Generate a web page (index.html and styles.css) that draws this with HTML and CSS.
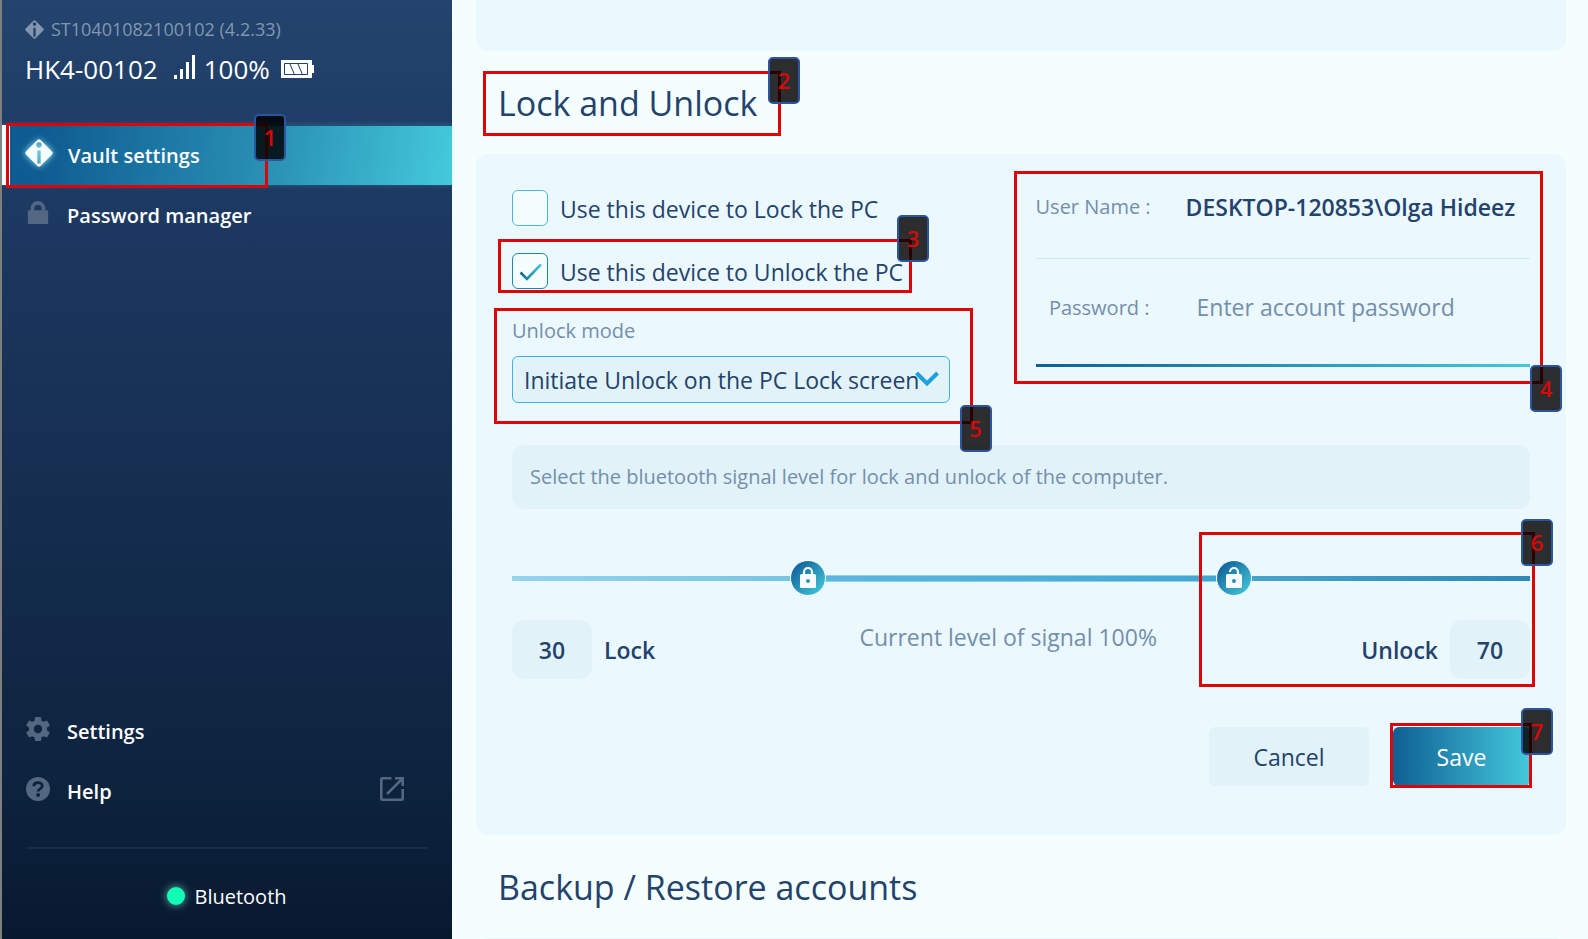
FILE: index.html
```html
<!DOCTYPE html>
<html lang="en">
<head>
<meta charset="utf-8">
<title>Vault settings</title>
<link rel="stylesheet" href="styles.css">
</head>
<body>
<div class="app">
  <aside class="sidebar">
    <header class="device">
      <div class="device-serial">
        <svg class="icon-serial" viewBox="0 0 28 28" aria-hidden="true"><path fill="currentColor" fill-rule="evenodd" d="M12.4 1a2.3 2.3 0 0 1 3.2 0L27 12.4a2.3 2.3 0 0 1 0 3.2L15.600 27a2.3 2.3 0 0 1-3.200 0L1 15.600a2.300 2.300 0 0 1 0-3.200zM14 3.300a2.700 2.700 0 1 0 0 5.400 2.700 2.700 0 0 0 0-5.400zM12.300 11.500v13h3.400v-13z"/></svg>
        <span>ST10401082100102 (4.2.33)</span>
      </div>
      <div class="device-status">
        <span class="device-name">HK4-00102</span>
        <svg class="icon-signal" viewBox="0 0 22 24" aria-hidden="true"><path fill="currentColor" d="M0 20h3v4H0zM6 14h3v10H6zM12 7h3v17h-3zM18 0h3v24h-3z"/></svg>
        <span>100%</span>
        <svg class="icon-battery" viewBox="0 0 33 18" aria-hidden="true"><path fill="currentColor" d="M0 0h31v5h2v8h-2v5H0z"/><path fill="none" stroke="#21416a" d="M3.500 3.500h23v11h-23zM9 4l4.500 10.500M17 4l4.500 10.500"/></svg>
      </div>
    </header>

    <nav class="nav">
      <a class="nav-item nav-item-active" href="#vault">
        <svg class="icon icon-vault" viewBox="0 0 28 28" aria-hidden="true"><path fill="currentColor" fill-rule="evenodd" d="M12.400 1a2.300 2.300 0 0 1 3.200 0L27 12.400a2.300 2.300 0 0 1 0 3.200L15.600 27a2.300 2.300 0 0 1-3.200 0L1 15.600a2.300 2.300 0 0 1 0-3.200zM14 3.300a2.700 2.700 0 1 0 0 5.400 2.700 2.700 0 0 0 0-5.400zM12.300 11.500v13h3.400v-13z"/></svg>
        <span>Vault settings</span>
        <span class="callout callout-nav"><b class="badge badge-top">1</b></span>
      </a>
      <a class="nav-item" href="#passwords">
        <svg class="icon" viewBox="0 0 24 26" aria-hidden="true"><path fill="currentColor" d="M2.500 10H4V8a8 8 0 0 1 16 0v2h1.500A1.500 1.500 0 0 1 23 11.500v12a1.500 1.500 0 0 1-1.500 1.500h-19A1.500 1.500 0 0 1 1 23.500v-12A1.500 1.500 0 0 1 2.500 10zM8 10h8V8a4 4 0 0 0-8 0z"/></svg>
        <span>Password manager</span>
      </a>
    </nav>

    <nav class="nav nav-bottom">
      <a class="nav-item" href="#settings">
        <svg class="icon" viewBox="2 2 20 20" aria-hidden="true"><path fill="currentColor" d="M12 15.500A3.500 3.500 0 0 1 8.500 12 3.500 3.500 0 0 1 12 8.500a3.500 3.500 0 0 1 3.500 3.500 3.500 3.500 0 0 1-3.500 3.500m7.430-2.530c.04-.32.07-.64.07-.97s-.03-.66-.07-1l2.110-1.630c.19-.15.24-.42.12-.64l-2-3.460c-.12-.22-.39-.31-.61-.22l-2.490 1c-.52-.39-1.060-.73-1.690-.98l-.37-2.650A.506.506 0 0 0 14 2h-4c-.25 0-.46.180-.5.420l-.37 2.650c-.63.250-1.170.590-1.690.980l-2.490-1c-.22-.09-.49 0-.61.220l-2 3.460c-.13.220-.07.490.12.640L4.570 11c-.04.340-.07.670-.07 1s.03.650.07.970l-2.110 1.660c-.19.150-.25.420-.12.640l2 3.460c.12.220.39.300.61.220l2.490-1.010c.52.400 1.060.740 1.690.990l.37 2.650c.04.240.250.420.5.420h4c.25 0 .46-.18.500-.42l.37-2.650c.63-.26 1.170-.59 1.690-.99l2.490 1.010c.22.080.49 0 .61-.22l2-3.460c.12-.22.070-.49-.12-.64z"/></svg>
        <span>Settings</span>
      </a>
      <a class="nav-item" href="#help">
        <svg class="icon" viewBox="0 0 24 24" aria-hidden="true"><circle cx="12" cy="12" r="12" fill="currentColor"/><path fill="none" stroke="#0d223d" stroke-width="2.800" d="M7.800 9.300C7.800 7 9.600 5.700 12 5.700s4.300 1.300 4.300 3.400c0 2.800-4.200 2.800-4.200 5.300"/><circle cx="12.100" cy="18" r="1.900" fill="#0d223d"/></svg>
        <span>Help</span>
        <svg class="icon icon-external" viewBox="0 0 26 26" aria-hidden="true"><path fill="none" stroke="currentColor" stroke-width="2.600" d="M12.500 2.300H3.300a1 1 0 0 0-1 1v19.400a1 1 0 0 0 1 1h19.400a1 1 0 0 0 1-1V13M16 2.300h7.700V10M23.500 2.500L8 18"/></svg>
      </a>
    </nav>

    <footer class="bluetooth"><span class="bluetooth-dot"></span><span>Bluetooth</span></footer>
  </aside>

  <main class="main">
    <section class="card card-previous"></section>

    <h2 class="heading"><span class="target">Lock and Unlock<span class="callout callout-heading"><b class="badge badge-top">2</b></span></span></h2>

    <form class="card card-lock">
      <div class="top">
        <div class="modes">
          <div class="check-row">
            <input class="check" type="checkbox" id="lock-pc">
            <label for="lock-pc">Use this device to Lock the PC</label>
          </div>
          <div class="check-row check-row-unlock target">
            <input class="check" type="checkbox" id="unlock-pc" checked>
            <label for="unlock-pc">Use this device to Unlock the PC</label>
            <span class="callout callout-unlock"><b class="badge badge-top">3</b></span>
          </div>
          <div class="mode target">
            <label class="mode-label" for="mode">Unlock mode</label>
            <div class="select-wrap">
              <select class="select" id="mode"><option>Initiate Unlock on the PC Lock screen</option></select>
              <svg class="chevron" viewBox="0 0 24 16" aria-hidden="true"><path fill="none" stroke="#1ca0de" stroke-width="4" d="M1.500 2L12 12.500 22.500 2"/></svg>
            </div>
            <span class="callout callout-mode"><b class="badge badge-bottom">5</b></span>
          </div>
        </div>

        <div class="account target">
          <div class="account-row">
            <span class="account-label">User Name :</span>
            <span class="account-user">DESKTOP-120853\Olga Hideez</span>
          </div>
          <div class="account-row account-row-password">
            <label class="account-label" for="password">Password :</label>
            <input class="account-password" id="password" type="password" placeholder="Enter account password">
          </div>
          <span class="callout callout-account"><b class="badge badge-bottom">4</b></span>
        </div>
      </div>

      <p class="hint">Select the bluetooth signal level for lock and unlock of the computer.</p>

      <div class="signal target">
        <div class="slider">
          <div class="track"><i class="track-low"></i><i class="track-mid"></i><i class="track-high"></i></div>
          <input class="range range-lock" type="range" min="4" max="96" value="30" aria-label="Lock level">
          <input class="range range-unlock" type="range" min="4" max="96" value="70" aria-label="Unlock level">
        </div>
        <div class="levels">
          <div class="level">
            <input class="level-value" id="lock-level" type="text" value="30">
            <label for="lock-level">Lock</label>
          </div>
          <p class="level-current">Current level of signal 100%</p>
          <div class="level">
            <label for="unlock-level">Unlock</label>
            <input class="level-value" id="unlock-level" type="text" value="70">
          </div>
        </div>
        <span class="callout callout-signal"><b class="badge badge-top">6</b></span>
      </div>

      <div class="actions">
        <button class="button" type="button">Cancel</button>
        <div class="target">
          <button class="button button-save" type="submit">Save</button>
          <span class="callout callout-save"><b class="badge badge-top">7</b></span>
        </div>
      </div>
    </form>

    <h2 class="heading">Backup / Restore accounts</h2>
    <section class="card card-next"></section>
  </main>
</div>
</body>
</html>
```

FILE: styles.css
```css
* { box-sizing: border-box; }

body {
  margin: 0;
  font-family: "Open Sans", "Noto Sans", sans-serif;
  font-size: 23px;
  color: #23426c;
  background: #f5feff;
}

input, select, button { font: inherit; color: inherit; }
p, h2 { margin: 0; font-weight: 400; }

.app {
  display: flex;
  height: 100vh;
  overflow: hidden;
}

/* Sidebar */
.sidebar {
  display: flex;
  flex-direction: column;
  flex: 0 0 452px;
  border-left: 2px solid #7f7f7f;
  color: #fff;
  background: linear-gradient(#23446e, #1c3860 25%, #0d223d 85%, #07192f);
}

.device { padding: 16px 24px 0 23px; height: 125px; }

.device-serial {
  display: flex;
  align-items: center;
  gap: 7px;
  font-size: 18px;
  line-height: 26px;
  color: #8297af;
}

.icon-serial { width: 19px; height: 19px; }

.device-status {
  display: flex;
  align-items: center;
  margin-top: 9px;
  font-size: 26px;
  line-height: 36px;
}

.icon-signal { width: 22px; height: 24px; margin: 0 8px 4px 16px; }
.icon-battery { width: 33px; height: 18px; margin-left: 11px; }

.nav-item {
  position: relative;
  display: flex;
  align-items: center;
  height: 60px;
  padding: 0 47px 0 24px;
  gap: 17px;
  font-size: 20px;
  font-weight: 600;
  color: #fff;
  text-decoration: none;
}

.icon { width: 24px; height: 24px; margin-bottom: 5px; color: #536780; }
.icon-external { width: 26px; height: 26px; margin-left: auto; }

.nav-item-active {
  border-left: 8px solid #f5feff;
  padding-left: 15px;
  gap: 15px;
  background: linear-gradient(98deg, #0f5c92 8%, #2a92b5 60%, #44c9dc);
  box-shadow: 0 0 5px rgba(120, 220, 230, 0.25), inset 0 1px #1c4f74;
}

.icon-vault {
  width: 28px;
  height: 28px;
  color: #f5feff;
  filter: drop-shadow(0 0 3px #a0f0f5);
}

.nav-bottom { margin-top: auto; }

.bluetooth {
  display: flex;
  align-items: center;
  justify-content: center;
  gap: 9px;
  margin: 26px 24px 0;
  height: 92px;
  padding-top: 4px;
  border-top: 2px solid #172c47;
  font-size: 20px;
}

.bluetooth-dot {
  width: 18px;
  height: 18px;
  border-radius: 50%;
  background: #10ffb5;
  box-shadow: 0 0 8px rgba(150, 255, 220, 0.7);
}

/* Main column */
.main { flex: 1; min-width: 0; padding: 0 22px 0 24px; }

.card { border-radius: 12px; background: #ebf8fd; }
.card-previous { height: 51px; border-radius: 0 0 12px 12px; }
.card-lock { padding: 36px 36px 49px; }
.card-next { height: 60px; }

.heading {
  padding: 27px 22px 25px;
  font-size: 34px;
  line-height: 51px;
}

.top {
  display: grid;
  grid-template-columns: 438fr 495fr;
  gap: 86px;
}

.check-row {
  display: flex;
  align-items: center;
  gap: 12px;
  height: 36px;
}

.check-row label { padding-top: 2px; }
.check-row-unlock { width: max-content; margin-top: 27px; }

.check {
  appearance: none;
  width: 36px;
  height: 36px;
  margin: 0;
  border: 1px solid #4cb5e2;
  border-radius: 6px;
  background: #f5feff;
}

.check:checked {
  border-color: #2385ab;
  background: #f5feff url("data:image/svg+xml,%3Csvg xmlns='http://www.w3.org/2000/svg' viewBox='0 0 34 34'%3E%3Cdefs%3E%3ClinearGradient id='g'%3E%3Cstop stop-color='%23106394'/%3E%3Cstop offset='1' stop-color='%2344c9dc'/%3E%3C/linearGradient%3E%3C/defs%3E%3Cpath fill='none' stroke='url(%23g)' stroke-width='2.6' d='M7.500 18.500L14 25 28 10.500'/%3E%3C/svg%3E");
}

.mode { margin-top: 26px; }

.mode-label {
  display: block;
  font-size: 20px;
  line-height: 32px;
  color: #738fab;
}

.select-wrap { position: relative; margin-top: 9px; }

.select {
  display: block;
  appearance: none;
  width: 100%;
  height: 47px;
  padding: 0 10px 0 11px;
  border: 1px solid #3fb2e3;
  border-radius: 6px;
  background: #e1f2f8;
}

.chevron {
  position: absolute;
  top: 15px;
  right: 11px;
  width: 24px;
  height: 16px;
  pointer-events: none;
}

.account { height: 177px; }

.account-row {
  display: flex;
  align-items: center;
  height: 69px;
  padding-bottom: 35px;
  border-bottom: 1px solid #c5eafa;
}

.account-row-password {
  height: 108px;
  padding-bottom: 9px;
  border-bottom: 3px solid;
  border-image: linear-gradient(90deg, #0f5f94, #44c9dc) 1;
}

.account-label {
  flex: 0 0 114px;
  margin-right: 35px;
  font-size: 20px;
  text-align: right;
  white-space: nowrap;
  color: #738fab;
}

.account-user { font-weight: 600; white-space: nowrap; }

.account-password {
  flex: 1;
  min-width: 0;
  padding: 0 12px;
  border: 0;
  outline: 0;
  background: none;
}

.account-password::placeholder { color: #738fab; opacity: 1; }

.hint {
  margin-top: 42px;
  padding: 16px 18px;
  border-radius: 12px;
  font-size: 20px;
  line-height: 32px;
  color: #738fab;
  background: #e1f2f8;
}

/* Signal level slider: a drawn track with two overlaid range inputs */
.signal { margin-top: 52px; }
.slider { display: grid; align-items: center; height: 34px; }
.slider > * { grid-area: 1 / 1; }

.track {
  display: grid;
  grid-template-columns: 296fr 426fr 297fr;
  align-items: center;
}

.track-low { height: 5px; background: linear-gradient(90deg, #93d4ef, #77c4e3); }
.track-mid { height: 7px; background: linear-gradient(90deg, #5cb7e0, #41a5d3); border: solid #8fd0ea; border-width: 1px 0; }
.track-high { height: 5px; background: linear-gradient(90deg, #4aa5ce, #2e89b7); }

.range {
  appearance: none;
  width: 100%;
  height: 34px;
  margin: 0;
  background: none;
  pointer-events: none;
}

.range::-webkit-slider-thumb {
  appearance: none;
  width: 36px;
  height: 36px;
  border: 1px solid #f5feff;
  border-radius: 50%;
  pointer-events: auto;
}

.range-lock::-webkit-slider-thumb {
  background: url("data:image/svg+xml,%3Csvg xmlns='http://www.w3.org/2000/svg' viewBox='0 0 34 34'%3E%3Cpath fill='none' stroke='%23f8fbfc' stroke-width='2.200' d='M13 14v-3a4 4 0 0 1 8 0v3'/%3E%3Crect x='9' y='13' width='16' height='14' rx='1.500' fill='%23f8fbfc'/%3E%3Ccircle cx='17' cy='20' r='2' fill='%232791b4'/%3E%3C/svg%3E"), linear-gradient(135deg, #10609a 10%, #44c9dc 95%);
}

.range-unlock::-webkit-slider-thumb {
  background: url("data:image/svg+xml,%3Csvg xmlns='http://www.w3.org/2000/svg' viewBox='0 0 34 34'%3E%3Cpath fill='none' stroke='%23f8fbfc' stroke-width='2.200' d='M13 11a4 4 0 0 1 8 0v3'/%3E%3Crect x='9' y='13' width='16' height='14' rx='1.500' fill='%23f8fbfc'/%3E%3Ccircle cx='17' cy='20' r='2' fill='%232791b4'/%3E%3C/svg%3E"), linear-gradient(135deg, #10609a 10%, #44c9dc 95%);
}

.levels {
  display: flex;
  justify-content: space-between;
  margin-top: 25px;
}

.level {
  display: flex;
  align-items: center;
  gap: 12px;
  font-weight: 600;
}

.level-value {
  width: 80px;
  height: 59px;
  padding: 0;
  border: 0;
  border-radius: 12px;
  text-align: center;
  background: #e1f2f8;
}

.level-current { line-height: 34px; color: #738fab; }

.actions {
  display: flex;
  justify-content: flex-end;
  gap: 24px;
  margin-top: 48px;
}

.button {
  display: block;
  width: 160px;
  height: 59px;
  padding: 0;
  border: 0;
  border-radius: 6px;
  background: #e1f2f8;
}

.button-save {
  width: 137px;
  color: #fff;
  background: linear-gradient(90deg, #0f5f94, #44c9dc);
}

/* Numbered callouts drawn over the controls they describe */
.target { position: relative; }

.callout {
  position: absolute;
  border: 3px solid #dc0508;
  pointer-events: none;
}

.badge {
  position: absolute;
  display: flex;
  align-items: center;
  justify-content: center;
  width: 32px;
  height: 47px;
  padding-bottom: 2px;
  border: 2px solid #2b55a0;
  border-radius: 5px;
  font-size: 22px;
  font-weight: 600;
  line-height: 30px;
  color: #dc0508;
  background: rgba(0, 0, 0, 0.82);
}

.badge-top { top: -17px; right: -22px; }
.badge-bottom { right: -22px; bottom: -31px; }

.callout-nav { top: -2px; bottom: -3px; left: -4px; width: 262px; }
.callout-nav .badge-top { top: -12px; right: -21px; }
.callout-heading { top: -9px; bottom: -10px; left: -15px; width: 298px; }
.callout-unlock { top: -14px; bottom: -4px; left: -14px; width: 414px; }
.callout-unlock .badge-top { top: -27px; right: -20px; }
.callout-mode { inset: -7px -23px -21px -18px; }
.callout-account { inset: -19px -13px -17px -22px; }
.callout-signal { top: -29px; right: -5px; bottom: -8px; width: 336px; }
.callout-signal .badge-top { top: -16px; right: -21px; }
.callout-save { inset: -4px -2px -2px -3px; }
.callout-save .badge-top { top: -18px; right: -24px; }
```
